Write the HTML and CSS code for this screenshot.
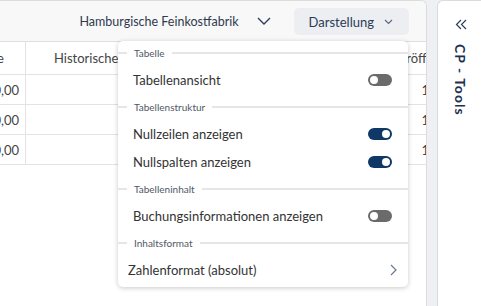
FILE: index.html
```html
<!DOCTYPE html>
<html>
<head>
<meta charset="utf-8">
<link rel="stylesheet" href="styles.css">
</head>
<body>
<div class="layout">
  <div class="main">
    <div class="topbar">
      <div class="company">Hamburgische Feinkostfabrik
        <svg class="chev-down" width="14" height="8" viewBox="0 0 14 8"><path d="M1 1 L7 7 L13 1" fill="none" stroke="#2d3e5a" stroke-width="1.4"/></svg>
      </div>
      <div class="view-btn">Darstellung
        <svg class="chev-small" width="9" height="6" viewBox="0 0 9 6"><path d="M1 1 L4.5 4.5 L8 1" fill="none" stroke="#5a6a84" stroke-width="1.2"/></svg>
      </div>
    </div>
    <div class="table">
      <div class="row head">
        <div class="cell c1"><span>Saldo Vorjahre</span></div>
        <div class="cell c2">Historische Werte</div>
        <div class="cell c3">Eröffnung</div>
      </div>
      <div class="row">
        <div class="cell c1 num">0,00</div>
        <div class="cell c2"></div>
        <div class="cell c3 num">1</div>
      </div>
      <div class="row">
        <div class="cell c1 num">0,00</div>
        <div class="cell c2"></div>
        <div class="cell c3 num">1</div>
      </div>
      <div class="row">
        <div class="cell c1 num">0,00</div>
        <div class="cell c2"></div>
        <div class="cell c3 num">1</div>
      </div>
    </div>

    <div class="menu">
      <div class="sec-title"><span>Tabelle</span></div>
      <div class="items">
        <div class="item">Tabellenansicht<span class="toggle"></span></div>
      </div>
      <div class="sec-title"><span>Tabellenstruktur</span></div>
      <div class="items">
        <div class="item">Nullzeilen anzeigen<span class="toggle on"></span></div>
        <div class="item">Nullspalten anzeigen<span class="toggle on"></span></div>
      </div>
      <div class="sec-title"><span>Tabelleninhalt</span></div>
      <div class="items">
        <div class="item">Buchungsinformationen anzeigen<span class="toggle"></span></div>
      </div>
      <div class="sec-title"><span>Inhaltsformat</span></div>
      <div class="items">
        <div class="item sub">Zahlenformat (absolut)
          <svg width="7" height="12" viewBox="0 0 7 12"><path d="M1 1 L6 6 L1 11" fill="none" stroke="#6b7890" stroke-width="1.2"/></svg>
        </div>
      </div>
    </div>
  </div>
  <div class="side">
    <svg class="dbl" width="12" height="11" viewBox="0 0 12 11"><path d="M6 1 L1.5 5.5 L6 10 M11 1 L6.5 5.5 L11 10" fill="none" stroke="#2d3e5a" stroke-width="1.2"/></svg>
    <div class="side-title">CP - Tools</div>
  </div>
</div>
</body>
</html>
```

FILE: styles.css
```css
* { box-sizing: border-box; }
html, body { margin: 0; padding: 0; }
body {
  width: 481px;
  height: 306px;
  overflow: hidden;
  background: #eef0f4;
  font-family: Lato, "Open Sans", sans-serif;
  color: #333;
}
.layout {
  display: flex;
  gap: 10px;
  height: 306px;
}
.main {
  position: relative;
  width: 427px;
  height: 306px;
  background: #fff;
  border-top: 1px solid #dcdcdc;
  border-right: 1px solid #dcdcdc;
  border-top-right-radius: 6px;
  overflow: hidden;
}
.topbar {
  height: 41px;
  background: #f8f8f8;
  border-bottom: 1px solid #dedede;
  display: flex;
  align-items: center;
  justify-content: flex-end;
  padding-right: 17px;
  gap: 23px;
}
.company {
  display: flex;
  align-items: center;
  gap: 18px;
  font-size: 12.5px;
  color: #2e3a4e;
}
.view-btn {
  display: flex;
  align-items: center;
  gap: 10px;
  height: 27px;
  margin-top: 1px;
  padding: 0 16px 0 15px;
  background: #eceef2;
  border-radius: 5px;
  font-size: 13px;
  color: #2b3a55;
}
.table { display: flex; flex-direction: column; }
.row {
  display: flex;
  height: 30px;
  border-bottom: 1px solid #e3e3e3;
}
.row.head { height: 33px; }
.cell {
  display: flex;
  align-items: center;
  font-size: 13px;
  color: #444;
  white-space: nowrap;
  overflow: hidden;
}
.c1 {
  width: 26px;
  border-right: 1px solid #e3e3e3;
  justify-content: flex-end;
  padding-right: 6px;
}
.head .c1 { padding-right: 21px; }
.c2 { width: 370px; padding-left: 28px; }
.c3 { flex: 1; padding-left: 0; }
.head .c3 { justify-content: flex-start; padding-left: 3px; }
.num { justify-content: flex-end; padding-right: 6px; }
.c3.num { padding-right: 0; margin-right: -3px; }

.menu {
  position: absolute;
  top: 40px;
  left: 118px;
  width: 290px;
  background: #fff;
  border-radius: 5px;
  box-shadow: 0 1px 5px rgba(0,0,0,0.22);
  padding-top: 2px;
}
.sec-title {
  display: flex;
  align-items: center;
  height: 20px;
  font-size: 10px;
  color: #505866;
  gap: 7px;
}
.sec-title::before {
  content: "";
  width: 9px;
  height: 2px;
  background: #e6e6e6;
}
.sec-title::after {
  content: "";
  flex: 1;
  height: 2px;
  background: #e6e6e6;
}
.items { padding: 3px 0; }
.item {
  height: 28px;
  display: flex;
  align-items: center;
  justify-content: space-between;
  padding: 0 16px 0 15px;
  font-size: 13px;
  color: #333;
}
.item.sub { padding: 0 11px 0 10px; }
.toggle {
  position: relative;
  width: 24px;
  height: 12px;
  border-radius: 6px;
  background: #6b6b6b;
}
.toggle::after {
  content: "";
  position: absolute;
  top: 2px;
  left: 2px;
  width: 8px;
  height: 8px;
  border-radius: 50%;
  background: #fff;
}
.toggle.on { background: #0f3866; }
.toggle.on::after { left: 14px; }

.side {
  flex: 1;
  background: #fff;
  border-left: 1px solid #d8dbe0;
  border-top: 1px solid #d8dbe0;
  border-top-left-radius: 6px;
  display: flex;
  flex-direction: column;
  align-items: center;
  padding-top: 18px;
  padding-left: 2px;
}
.dbl { display: block; }
.side-title {
  margin-top: 14px;
  writing-mode: vertical-rl;
  font-weight: 700;
  font-size: 14px;
  letter-spacing: 1px;
  color: #1d3050;
}
```
